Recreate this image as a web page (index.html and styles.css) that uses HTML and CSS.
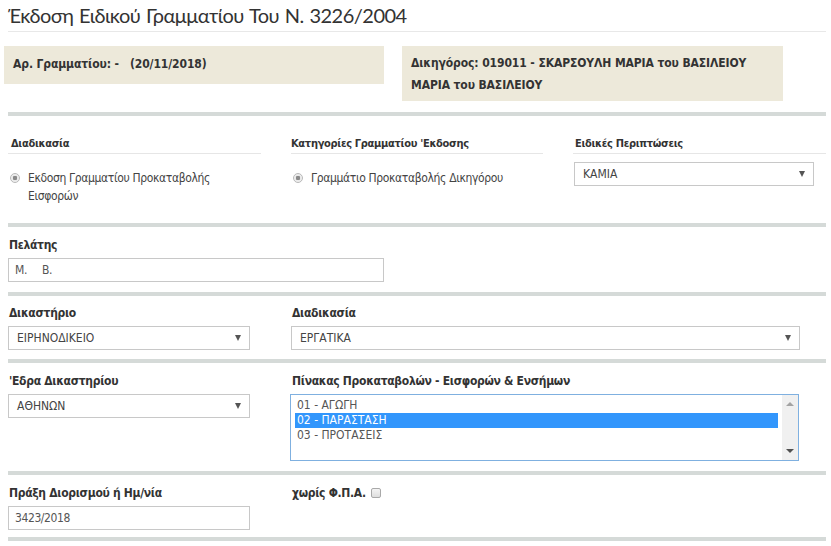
FILE: index.html
```html
<!DOCTYPE html>
<html lang="el">
<head>
<meta charset="utf-8">
<title>Έκδοση Ειδικού Γραμματίου</title>
<link rel="stylesheet" href="styles.css">
</head>
<body>
<div class="page">
  <h1 class="title">Έκδοση Ειδικού Γραμματίου Του Ν. 3226/2004</h1>

  <div class="info-row">
    <div class="info info-left">Αρ. Γραμματίου: -&nbsp;&nbsp; (20/11/2018)</div>
    <div class="info info-right">Δικηγόρος: 019011 - ΣΚΑΡΣΟΥΛΗ ΜΑΡΙΑ του ΒΑΣΙΛΕΙΟΥ<br>ΜΑΡΙΑ του ΒΑΣΙΛΕΙΟΥ</div>
  </div>

  <section class="section sec-1">
    <div class="col col-a">
      <div class="head">Διαδικασία</div>
      <div class="radio-line"><span class="radio"></span><span class="radio-text narrow">Εκδοση Γραμματίου Προκαταβολής Εισφορών</span></div>
    </div>
    <div class="col col-b">
      <div class="head">Κατηγορίες Γραμματίου 'Εκδοσης</div>
      <div class="radio-line"><span class="radio"></span><span class="radio-text">Γραμμάτιο Προκαταβολής Δικηγόρου</span></div>
    </div>
    <div class="col col-c">
      <div class="head">Ειδικές Περιπτώσεις</div>
      <div class="select sel-kamia"><span>ΚΑΜΙΑ</span><span class="arrow"></span></div>
    </div>
  </section>

  <section class="section sec-client">
    <div class="label">Πελάτης</div>
    <div class="input in-client">Μ.&nbsp;&nbsp;&nbsp;&nbsp; Β.</div>
  </section>

  <section class="section sec-grid sec-court">
    <div class="col">
      <div class="label">Δικαστήριο</div>
      <div class="select sel-small"><span>ΕΙΡΗΝΟΔΙΚΕΙΟ</span><span class="arrow"></span></div>
    </div>
    <div class="col col-wide">
      <div class="label">Διαδικασία</div>
      <div class="select sel-wide"><span>ΕΡΓΑΤΙΚΑ</span><span class="arrow"></span></div>
    </div>
  </section>

  <section class="section sec-grid sec-seat">
    <div class="col">
      <div class="label">'Εδρα Δικαστηρίου</div>
      <div class="select sel-small"><span>ΑΘΗΝΩΝ</span><span class="arrow"></span></div>
    </div>
    <div class="col col-wide">
      <div class="label">Πίνακας Προκαταβολών - Εισφορών &amp; Ενσήμων</div>
      <div class="listbox">
        <div class="options">
          <div class="opt">01 - ΑΓΩΓΗ</div>
          <div class="opt selected">02 - ΠΑΡΑΣΤΑΣΗ</div>
          <div class="opt">03 - ΠΡΟΤΑΣΕΙΣ</div>
        </div>
        <div class="scrollbar">
          <span class="sb-up"></span>
          <span class="sb-down"></span>
        </div>
      </div>
    </div>
  </section>

  <section class="section sec-grid sec-last">
    <div class="col">
      <div class="label">Πράξη Διορισμού ή Ημ/νία</div>
      <div class="input in-small">3423/2018</div>
    </div>
    <div class="col col-wide">
      <div class="label">χωρίς Φ.Π.Α. <span class="checkbox"></span></div>
    </div>
  </section>
</div>
</body>
</html>
```

FILE: styles.css
```css
* { box-sizing: border-box; }

html, body {
  margin: 0;
  padding: 0;
  background: #ffffff;
}

body {
  font-family: "DejaVu Sans Condensed", "DejaVu Sans", sans-serif;
  font-size: 12px;
  color: #333333;
}

.page {
  width: 826px;
  padding-left: 8px;
}

.title {
  margin: 0;
  padding-top: 1px;
  height: 32px;
  font-family: "Lato", "Open Sans", sans-serif;
  font-weight: 400;
  font-size: 20px;
  letter-spacing: -0.5px;
  word-spacing: 1px;
  line-height: 28px;
  color: #333333;
  border-bottom: 1px solid #e8e8e8;
}

.info-row {
  display: flex;
  align-items: flex-start;
  gap: 18px;
  margin-left: -4px;
  margin-top: 14px;
}

.info {
  background: #ede9da;
  font-weight: bold;
  font-size: 12px;
  letter-spacing: -0.1px;
  color: #333333;
  padding: 0 9px;
}

.info-left {
  width: 380px;
  height: 38px;
  line-height: 36px;
}

.info-right {
  width: 381px;
  height: 55px;
  padding-top: 6px;
  line-height: 22px;
}

.section {
  border-top: 4px solid #d5dad8;
}

.sec-1 {
  margin-top: 11px;
  display: grid;
  grid-template-columns: 253px 252px 253px;
  column-gap: 30px;
  height: 111px;
  padding-top: 20px;
}

.head {
  font-weight: bold;
  font-size: 11px;
  letter-spacing: -0.3px;
  line-height: 16px;
  padding-bottom: 1px;
  border-bottom: 1px solid #e6e6e6;
}

.col-a .head { padding-left: 3px; }
.col-b .head { padding-left: 0; }
.col-c .head { padding-left: 2px; }

.radio-line {
  display: flex;
  align-items: flex-start;
  gap: 8px;
  margin-top: 15px;
  padding-left: 2px;
  font-size: 12px;
  letter-spacing: -0.35px;
  line-height: 18px;
  color: #444;
}

.radio-text.narrow {
  max-width: 200px;
}

.radio {
  flex: none;
  width: 10px;
  height: 10px;
  margin-top: 4px;
  border-radius: 50%;
  border: 1px solid #b9b9b9;
  background: radial-gradient(circle, #8a8a8a 0 2px, #e8e8e8 2.5px, #f6f6f6 5px);
}

.select {
  display: flex;
  align-items: center;
  justify-content: space-between;
  height: 24px;
  border: 1px solid #c8c8c8;
  background: #ffffff;
  padding: 0 8px 0 8px;
  font-size: 12px;
  color: #444;
}

.arrow {
  width: 0;
  height: 0;
  border-left: 3.5px solid transparent;
  border-right: 3.5px solid transparent;
  border-top: 6px solid #555;
}

.sel-kamia {
  margin-top: 8px;
  width: 240px;
  margin-left: 1px;
}

.label {
  font-weight: bold;
  font-size: 12px;
  letter-spacing: -0.3px;
  line-height: 16px;
  padding-left: 1px;
  margin-bottom: 5px;
}

.sec-client {
  height: 69px;
  padding-top: 10px;
}

.input {
  height: 24px;
  border: 1px solid #c8c8c8;
  line-height: 22px;
  padding-left: 6px;
  font-size: 12px;
  letter-spacing: -0.4px;
  color: #555;
}

.in-client { width: 376px; }
.in-small { width: 242px; }

.sec-grid {
  display: grid;
  grid-template-columns: 253px 535px;
  column-gap: 30px;
  padding-top: 9px;
}

.sec-court { height: 67px; }
.sec-seat { height: 112px; padding-top: 10px; }
.sec-last { height: 70px; padding-top: 10px; border-bottom: 4px solid #d5dad8; }

.sel-small { width: 242px; }
.sel-wide { width: 509px; }

.listbox {
  display: flex;
  width: 509px;
  height: 67px;
  border: 1px solid #7fb0e0;
  background: #fff;
  margin-left: -1px;
}

.options {
  flex: 1;
  padding: 3px 4px 0 4px;
}

.opt {
  font-size: 12px;
  line-height: 15px;
  padding-left: 2px;
  color: #555;
}

.opt.selected {
  background: #3296fc;
  color: #ffffff;
}

.scrollbar {
  position: relative;
  width: 16px;
  background: #f0f0f0;
}

.sb-up, .sb-down {
  position: absolute;
  left: 4px;
  width: 0;
  height: 0;
  border-left: 4px solid transparent;
  border-right: 4px solid transparent;
}

.sb-up {
  top: 7px;
  border-bottom: 4px solid #a3a3a3;
}

.sb-down {
  bottom: 7px;
  border-top: 4px solid #505050;
}

.checkbox {
  display: inline-block;
  width: 10px;
  height: 10px;
  border: 1px solid #a9a9a9;
  border-radius: 2px;
  background: linear-gradient(#f4f4f4, #dedede);
  vertical-align: -1px;
  margin-left: 2px;
}
```
